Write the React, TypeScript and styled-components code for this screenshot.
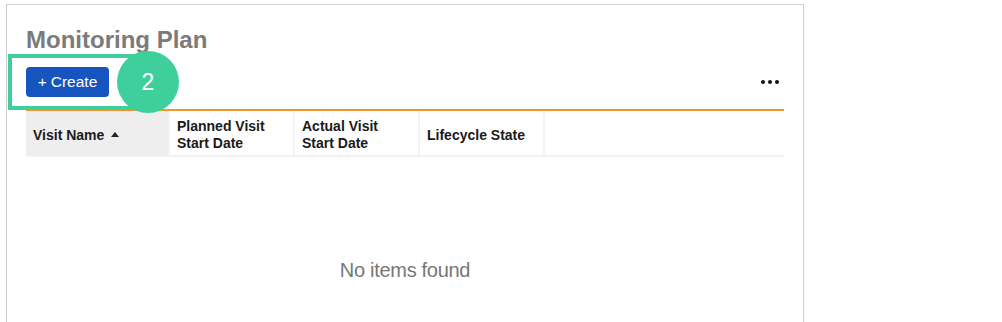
import React from 'react';
import styled, {createGlobalStyle} from 'styled-components';

const Global = createGlobalStyle`
  html, body {
    margin: 0;
    padding: 0;
    background: #fff;
    font-family: 'Liberation Sans', Arial, sans-serif;
  }
`;

const Page = styled.div`
  width: 1002px;
  height: 322px;
  overflow: hidden;
  padding: 4px 0 0 6px;
  box-sizing: border-box;
`;

const Panel = styled.div`
  width: 798px;
  height: 330px;
  box-sizing: border-box;
  border: 1px solid #cfcfcf;
  border-bottom: none;
  padding: 20px 19px 0 19px;
`;

const Title = styled.h1`
  margin: 0;
  font-size: 24px;
  line-height: 29px;
  font-weight: bold;
  color: #7b7b7b;
`;

const Toolbar = styled.div`
  position: relative;
  display: flex;
  align-items: center;
  justify-content: space-between;
  height: 55px;
`;

const Highlight = styled.div`
  position: absolute;
  left: -18px;
  top: 0;
  width: 130px;
  height: 56px;
  box-sizing: border-box;
  border: 4px solid #3fcf9d;
  pointer-events: none;
`;

const Badge = styled.div`
  position: absolute;
  left: 91px;
  top: -3px;
  width: 62px;
  height: 62px;
  border-radius: 50%;
  background: #3fcf9d;
  color: #fff;
  font-size: 23px;
  display: flex;
  align-items: center;
  justify-content: center;
`;

const CreateButton = styled.button`
  height: 30px;
  width: 83px;
  border: none;
  border-radius: 4px;
  background: #1655c0;
  color: #fff;
  font-family: 'Liberation Sans', Arial, sans-serif;
  font-size: 15.5px;
  padding: 0;
  display: flex;
  align-items: center;
  justify-content: center;
  gap: 4px;
`;

const More = styled.div`
  display: flex;
  gap: 3px;
  margin-right: 5px;
`;

const Dot = styled.span`
  width: 4px;
  height: 4px;
  border-radius: 50%;
  background: #111;
`;

const Table = styled.div`
  border-top: 2px solid #f0962f;
`;

const HeaderRow = styled.div`
  display: flex;
  height: 44px;
  border-bottom: 2px solid #f2f2f2;
`;

const HeaderCell = styled.div<{sorted?: boolean; w?: number}>`
  width: ${p => (p.w ? `${p.w}px` : 'auto')};
  flex: ${p => (p.w ? 'none' : '1')};
  box-sizing: border-box;
  padding: 4px 7px 0;
  background: ${p => (p.sorted ? '#eeeeee' : '#fff')};
  border-right: ${p => (p.w ? '2px solid #f3f3f3' : 'none')};
  display: flex;
  align-items: center;
  font-size: 14px;
  line-height: 17px;
  font-weight: bold;
  color: #1a1a1a;
`;

const SortArrow = styled.span`
  display: inline-block;
  margin-left: 7px;
  width: 0;
  height: 0;
  border-left: 4px solid transparent;
  border-right: 4px solid transparent;
  border-bottom: 5px solid #222;
  position: relative;
  top: -1px;
`;

const Empty = styled.div`
  height: 125px;
  display: flex;
  align-items: flex-end;
  justify-content: center;
  font-size: 20px;
  color: #777;
  letter-spacing: -0.3px;
`;

export default function App() {
  return (
    <Page>
      <Global />
      <Panel>
        <Title>Monitoring Plan</Title>
        <Toolbar>
          <CreateButton>
            <span>+</span>
            <span>Create</span>
          </CreateButton>
          <More>
            <Dot />
            <Dot />
            <Dot />
          </More>
          <Highlight />
          <Badge>2</Badge>
        </Toolbar>
        <Table>
          <HeaderRow>
            <HeaderCell sorted w={144}>
              Visit Name
              <SortArrow />
            </HeaderCell>
            <HeaderCell w={125}>
              Planned Visit
              <br />
              Start Date
            </HeaderCell>
            <HeaderCell w={125}>
              Actual Visit
              <br />
              Start Date
            </HeaderCell>
            <HeaderCell w={125}>Lifecycle State</HeaderCell>
            <HeaderCell />
          </HeaderRow>
          <Empty>No items found</Empty>
        </Table>
      </Panel>
    </Page>
  );
}
